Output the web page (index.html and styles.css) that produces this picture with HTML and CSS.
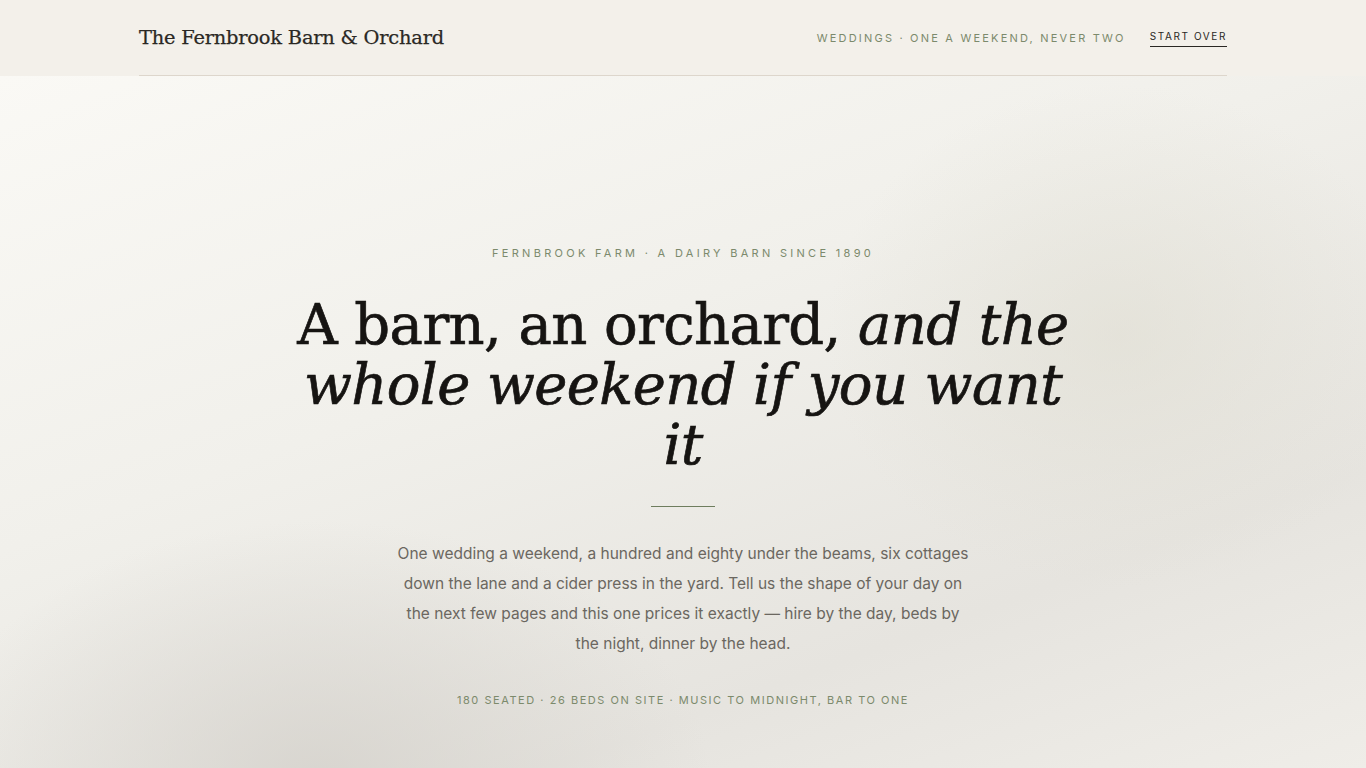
FILE: index.html
```html
<!DOCTYPE html>
<html lang="en">
<head>
    <meta charset="utf-8">
    <title>The Fernbrook Barn &amp; Orchard</title>
    <link rel="stylesheet" href="styles.css">
</head>
<body>
    <header class="site-header">
        <div class="header-inner">
            <a class="brand" href="#">The Fernbrook Barn &amp; Orchard</a>
            <nav class="header-nav">
                <span class="header-note">Weddings · One a weekend, never two</span>
                <a class="start-over" href="#">Start over</a>
            </nav>
        </div>
    </header>

    <main class="hero">
        <div class="hero-inner">
            <p class="eyebrow">Fernbrook Farm · A dairy barn since 1890</p>
            <h1 class="hero-title">A barn, an orchard, <em>and the whole weekend if you want it</em></h1>
            <div class="hero-rule"></div>
            <p class="hero-lede">One wedding a weekend, a hundred and eighty under the beams, six cottages down the lane and a cider press in the yard. Tell us the shape of your day on the next few pages and this one prices it exactly — hire by the day, beds by the night, dinner by the head.</p>
            <p class="hero-facts">180 seated · 26 beds on site · Music to midnight, bar to one</p>
        </div>
    </main>
</body>
</html>
```

FILE: styles.css
```css
* {
    box-sizing: border-box;
}

html,
body {
    margin: 0;
    height: 100%;
}

body {
    font-family: "Inter", "Liberation Sans", sans-serif;
    color: #1f1d1a;
    background: #f3f0ea;
}

a {
    color: inherit;
    text-decoration: none;
}

/* header */
.site-header {
    background: #f3f0ea;
}

.header-inner {
    max-width: 1088px;
    height: 76px;
    margin: 0 auto;
    display: flex;
    align-items: center;
    justify-content: space-between;
    border-bottom: 1px solid #ddd6cc;
}

.brand {
    font-family: "DejaVu Serif", "Liberation Serif", serif;
    font-size: 19.4px;
    letter-spacing: -0.2px;
    color: #2a2824;
    -webkit-text-stroke: 0.25px #2a2824;
}

.header-nav {
    display: flex;
    align-items: center;
    gap: 24px;
}

.header-note {
    font-size: 11px;
    letter-spacing: 0.2em;
    text-transform: uppercase;
    color: #7c8a6c;
}

.start-over {
    margin-top: 2px;
    font-size: 10px;
    letter-spacing: 0.16em;
    text-transform: uppercase;
    color: #2a2824;
    padding-bottom: 4px;
    border-bottom: 1px solid #2a2824;
}

/* hero */
.hero {
    min-height: calc(100% - 76px);
    background:
        radial-gradient(ellipse 420px 360px at 1120px 260px, rgba(222, 220, 208, 0.55), rgba(222, 220, 208, 0) 70%),
        radial-gradient(ellipse 520px 340px at 320px 700px, rgba(212, 209, 203, 0.8), rgba(212, 209, 203, 0) 75%),
        linear-gradient(160deg, #faf9f5 0%, #f1f0eb 40%, #e6e4df 75%, #efede8 100%);
    padding-top: 170px;
}

.hero-inner {
    max-width: 800px;
    margin: 0 auto;
    text-align: center;
}

.eyebrow {
    margin: 0;
    font-size: 11px;
    letter-spacing: 0.3em;
    text-transform: uppercase;
    color: #7c8a6c;
}

.hero-title {
    margin: 35px auto 0;
    max-width: 790px;
    font-family: "DejaVu Serif", "Liberation Serif", serif;
    font-weight: 400;
    font-size: 56px;
    line-height: 60px;
    letter-spacing: -0.6px;
    color: #161412;
    -webkit-text-stroke: 0.7px #161412;
}

.hero-title em {
    font-style: italic;
}

.hero-rule {
    width: 64px;
    height: 1px;
    margin: 31px auto 0;
    background: #6e7d5e;
}

.hero-lede {
    margin: 32px auto 0;
    max-width: 576px;
    font-size: 15.5px;
    line-height: 30px;
    color: #6b6760;
}

.hero-facts {
    margin: 34px 0 0;
    font-size: 11px;
    letter-spacing: 0.14em;
    text-transform: uppercase;
    color: #7c8a6c;
}
```
